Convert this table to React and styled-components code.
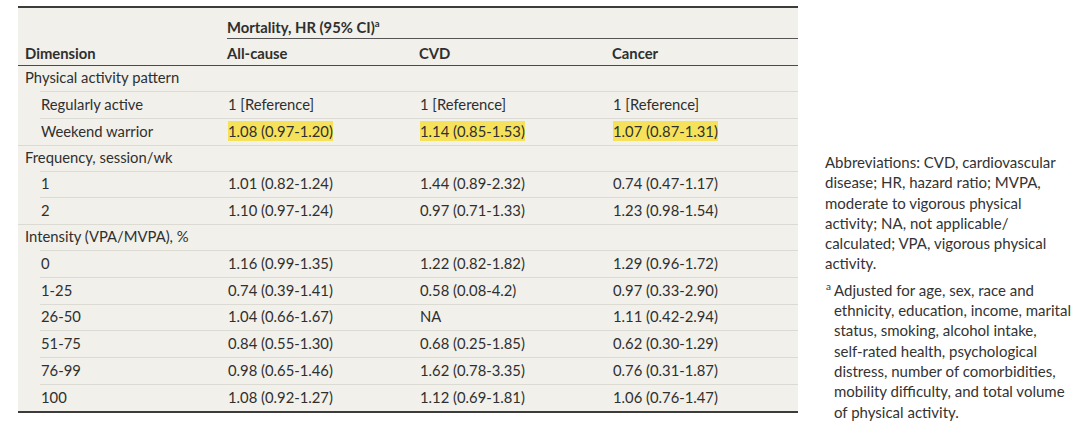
import styled, { createGlobalStyle } from "styled-components";

const GlobalStyle = createGlobalStyle`
  html, body {
    margin: 0;
    padding: 0;
    background: #ffffff;
  }
  body {
    font-family: Lato, "Liberation Sans", sans-serif;
    color: #2f2f2f;
  }
`;

const sections = [
  {
    title: "Physical activity pattern",
    rows: [
      { label: "Regularly active", values: ["1 [Reference]", "1 [Reference]", "1 [Reference]"] },
      { label: "Weekend warrior", values: ["1.08 (0.97-1.20)", "1.14 (0.85-1.53)", "1.07 (0.87-1.31)"], highlight: true },
    ],
  },
  {
    title: "Frequency, session/wk",
    rows: [
      { label: "1", values: ["1.01 (0.82-1.24)", "1.44 (0.89-2.32)", "0.74 (0.47-1.17)"] },
      { label: "2", values: ["1.10 (0.97-1.24)", "0.97 (0.71-1.33)", "1.23 (0.98-1.54)"] },
    ],
  },
  {
    title: "Intensity (VPA/MVPA), %",
    rows: [
      { label: "0", values: ["1.16 (0.99-1.35)", "1.22 (0.82-1.82)", "1.29 (0.96-1.72)"] },
      { label: "1-25", values: ["0.74 (0.39-1.41)", "0.58 (0.08-4.2)", "0.97 (0.33-2.90)"] },
      { label: "26-50", values: ["1.04 (0.66-1.67)", "NA", "1.11 (0.42-2.94)"] },
      { label: "51-75", values: ["0.84 (0.55-1.30)", "0.68 (0.25-1.85)", "0.62 (0.30-1.29)"] },
      { label: "76-99", values: ["0.98 (0.65-1.46)", "1.62 (0.78-3.35)", "0.76 (0.31-1.87)"] },
      { label: "100", values: ["1.08 (0.92-1.27)", "1.12 (0.69-1.81)", "1.06 (0.76-1.47)"] },
    ],
  },
];

const App = () => (
  <>
    <GlobalStyle />
    <Page>
      <Table>
        <HeadTop>
          <Spanner>
            Mortality, HR (95% CI)<Sup>a</Sup>
          </Spanner>
        </HeadTop>
        <HeadRow>
          <HeadCell>Dimension</HeadCell>
          <HeadCell>All-cause</HeadCell>
          <HeadCell>CVD</HeadCell>
          <HeadCell>Cancer</HeadCell>
        </HeadRow>
        {sections.map((section) => (
          <Section key={section.title}>
            <SectionRow>{section.title}</SectionRow>
            {section.rows.map((row) => (
              <SubRow key={row.label}>
                <Cell>{row.label}</Cell>
                {row.values.map((value, i) => (
                  <Cell key={i}>
                    <Value $highlight={row.highlight}>{value}</Value>
                  </Cell>
                ))}
              </SubRow>
            ))}
          </Section>
        ))}
      </Table>
      <Notes>
        <Note>
          Abbreviations: CVD, cardiovascular disease; HR, hazard ratio; MVPA,
          moderate to vigorous physical activity; NA, not applicable/
          calculated; VPA, vigorous physical activity.
        </Note>
        <Footnote>
          <Marker>a</Marker>
          Adjusted for age, sex, race and ethnicity, education, income, marital
          status, smoking, alcohol intake, self&#8209;rated health, psychological
          distress, number of comorbidities, mobility difficulty, and total
          volume of physical activity.
        </Footnote>
      </Notes>
    </Page>
  </>
);

export default App;

const Page = styled.div`
  display: flex;
  align-items: flex-start;
  padding: 6px 0 0 18px;
  gap: 27px;
  width: 1080px;
  height: 425px;
  box-sizing: border-box;
  overflow: hidden;
`;

const Table = styled.div`
  width: 780px;
  flex-shrink: 0;
  background: #f1f0ea;
  border-top: 2px solid #3c3c3c;
  border-bottom: 2px solid #3c3c3c;
  font-size: 14.8px;
`;

const HeadTop = styled.div`
  height: 31px;
  padding-left: 209px;
  display: flex;
`;

const Spanner = styled.div`
  flex: 1;
  font-weight: 700;
  line-height: 38px;
  border-bottom: 1.5px solid #555555;
  white-space: nowrap;
  height: 30px;
`;

const Sup = styled.sup`
  font-size: 9.5px;
  font-weight: 700;
  vertical-align: 6px;
  line-height: 0;
`;

const HeadRow = styled.div`
  display: grid;
  grid-template-columns: 202px 192px 193px 1fr;
  padding-left: 7px;
  height: 26px;
  align-items: center;
  border-bottom: 1.5px solid #4a4a4a;
`;

const HeadCell = styled.div`
  font-weight: 700;
  padding-top: 2px;
`;

const Section = styled.div`
  & + & {
    border-top: 1.75px solid #dcdbd3;
  }
`;

const SectionRow = styled.div`
  height: 25px;
  line-height: 23px;
  padding-left: 7px;
`;

const SubRow = styled.div`
  display: grid;
  grid-template-columns: 187px 192px 193px 1fr;
  margin-left: 22px;
  padding: 0 0 2px 1px;
  box-sizing: border-box;
  align-items: center;
  border-top: 1.75px solid #dcdbd3;
  height: 26.75px;
`;

const Cell = styled.div`
  white-space: nowrap;
`;

const Value = styled.span`
  background: ${({ $highlight }) => ($highlight ? "#f6e25a" : "transparent")};
  padding: 1px 0;
`;

const Notes = styled.div`
  width: 247px;
  margin-top: 146px;
  font-size: 15px;
  line-height: 20.3px;
  color: #333333;
`;

const Note = styled.p`
  margin: 0 0 6px 0;
`;

const Footnote = styled.p`
  margin: 0;
  padding-left: 9px;
  position: relative;
`;

const Marker = styled.span`
  position: absolute;
  left: 1px;
  top: -4px;
  font-size: 10px;
`;
